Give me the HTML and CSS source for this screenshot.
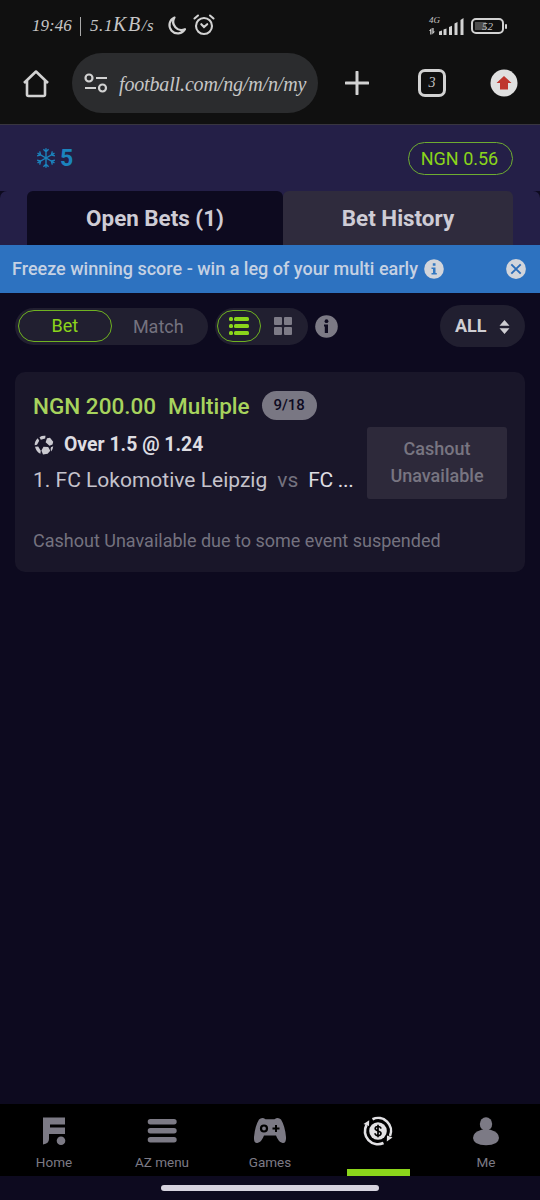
FILE: index.html
```html
<!DOCTYPE html>
<html lang="en">
<head>
<meta charset="utf-8">
<title>Open Bets</title>
<link rel="stylesheet" href="styles.css">
</head>
<body>
<div class="browser">
  <div class="status">
    <span class="clock">19:46</span><span class="divider"></span><span class="speed">5.1<span class="unit">KB</span>/s</span>
    <svg class="moon" width="20" height="20" viewBox="0 0 20 20"><path d="M7.500 1.500A8.300 8.300 0 1 0 18 13.200 8.200 8.200 0 0 1 7.500 1.500Z" fill="none" stroke="#d2d2d2" stroke-width="2.200" stroke-linejoin="round"/></svg>
    <svg class="alarm" width="22" height="22" viewBox="0 0 22 22" fill="none" stroke="#d2d2d2" stroke-width="2.100" stroke-linecap="round"><circle cx="11" cy="12" r="8"/><path d="M1.500 4.500 5 1.500M20.500 4.500 17 1.500M8.300 10.200 11 13l3.200-2.800"/></svg>
    <span class="signal"><span class="net">4G</span></span>
    <svg class="bars" width="36" height="18" viewBox="0 0 36 18" fill="#d2d2d2"><path d="M10 14.500 13 13.500V18h-3zM14.500 12.500l3-1V18h-3zM20 10l3-1.200V18h-3zM25.500 6.500l3-1.500v13h-3zM31.500 3l3-2v17h-3zM0 14l2.500-3v6.500H1.200V14ZM3.300 11h1.300v3.500H6l-2.700 3Z"/></svg>
    <span class="battery"><span class="level">52</span></span>
  </div>
  <div class="toolbar">
    <svg width="28" height="30" viewBox="0 0 28 30"><path d="M2 15 14 3.500 26 15M5 12.500v14q0 1.500 1.500 1.500h15q1.500 0 1.500-1.500v-14" fill="none" stroke="#d2d2d2" stroke-width="2.600" stroke-linejoin="round"/></svg>
    <div class="address">
      <svg width="24" height="20" viewBox="0 0 24 20" fill="none" stroke="#d2d2d2" stroke-width="2.200"><circle cx="5" cy="5" r="3.500"/><path d="M12 5h11M1 15h11"/><circle cx="18.500" cy="15" r="3.500"/></svg>
      <span class="url">football.com/ng/m/n/my</span>
    </div>
    <svg class="plus" width="24" height="24" viewBox="0 0 24 24"><path d="M12 1v22M1 12h22" stroke="#d2d2d2" stroke-width="3" stroke-linecap="round"/></svg>
    <span class="tabcount">3</span>
    <svg class="update" width="28" height="28" viewBox="0 0 28 28"><circle cx="14" cy="14" r="13.500" fill="#e0e0e0"/><path d="M14 7 21.500 14H18v6.500h-8V14H6.500Z" fill="#bf352d"/></svg>
  </div>
</div>

<header class="wallet">
  <svg width="20" height="22" viewBox="0 0 20 22"><g fill="none" stroke="#1b83bd" stroke-width="1.400"><path id="arm" d="M10 11V1.200M7.400 2.200 10 4.800l2.600-2.600"/><use href="#arm" transform="rotate(60 10 11)"/><use href="#arm" transform="rotate(120 10 11)"/><use href="#arm" transform="rotate(180 10 11)"/><use href="#arm" transform="rotate(240 10 11)"/><use href="#arm" transform="rotate(300 10 11)"/></g></svg>
  <span class="freezes">5</span>
  <span class="balance">NGN 0.56</span>
</header>
<div class="tabshell"><nav class="tabs"><span class="tab active">Open Bets (1)</span><span class="tab history">Bet History</span></nav></div>

<div class="banner">
  <span class="promo">Freeze winning score - win a leg of your multi early</span>
  <svg class="binfo" width="20" height="20" viewBox="0 0 20 20"><circle cx="10" cy="10" r="9.800" fill="#d2d5db"/><path d="M7.500 8.500h4V14h1.300v1.500H7.500V14H9v-4H7.500ZM8.800 4.300h2.700v2.500H8.800Z" fill="#3479c1"/></svg>
  <svg class="close" width="20" height="20" viewBox="0 0 20 20"><circle cx="10" cy="10" r="9.900" fill="#d2d5db"/><path d="m5.300 5.300 9.400 9.400m0-9.400-9.400 9.400" stroke="#2c6db8" stroke-width="1.900"/></svg>
</div>

<main>
  <div class="filters">
    <div class="switch"><span class="choice selected">Bet</span><span class="choice match">Match</span></div>
    <div class="views">
      <span class="view selected"><svg width="20" height="20" viewBox="0 0 20 20" fill="#8bd51b"><rect y="1" width="4" height="4" rx="1.500"/><rect x="5" y="1" width="15" height="4" rx="1.500"/><rect y="8" width="4" height="4" rx="1.500"/><rect x="5" y="8" width="15" height="4" rx="1.500"/><rect y="15" width="4" height="4" rx="1.500"/><rect x="5" y="15" width="15" height="4" rx="1.500"/></svg></span>
      <span class="view"><svg width="18" height="18" viewBox="0 0 18 18" fill="#7d7b87"><rect width="8" height="8" rx="1"/><rect x="10" width="8" height="8" rx="1"/><rect y="10" width="8" height="8" rx="1"/><rect x="10" y="10" width="8" height="8" rx="1"/></svg></span>
    </div>
    <svg class="help" width="23" height="23" viewBox="0 0 23 23"><circle cx="11.500" cy="11.500" r="11.300" fill="#7c7a85"/><path d="M9 9.500h4V18H9.800v-6.500H9Z" fill="#0e0b20"/><circle cx="11.500" cy="6.200" r="1.900" fill="#0e0b20"/></svg>
    <div class="all"><span>ALL</span><svg width="11" height="14" viewBox="0 0 11 14" fill="#cfced3"><path d="m5.500 0 5 5.800H.5ZM5.500 14l5-5.800H.5Z"/></svg></div>
  </div>

  <article class="card">
    <div class="summary"><span class="stake">NGN 200.00</span><span class="kind">Multiple</span><span class="progress">9/18</span></div>
    <div class="details">
      <div class="selection">
        <div class="pick"><svg width="20" height="20" viewBox="0 0 20 20" fill="#cbcad0"><path d="M5.500 2.200Q8 .4 11.500.8l-.3 2.700L6.800 4.700ZM3.800 3.200l1.400 2.600L3 9.800.7 10.200Q.5 6 3.800 3.200ZM13 3.200l3-.4 3.200 4-.7 2.700-3 1.300-3.900-3.500ZM1 11.800l3.200-.2 2.600 4.200-.4 3Q2.500 17.500 1 11.800ZM9.500 11.700l4.700.3 2.100 3.700-2.700 3.100-4.600.8-1.600-4ZM17 12.200l2.200-1q-.3 3.300-2 5.300l-.6-2.500Z"/></svg><span>Over 1.5 @ 1.24</span></div>
        <div class="teams"><span class="home">1. FC Lokomotive Leipzig</span><span class="vs">vs</span><span class="away">FC ...</span></div>
      </div>
      <div class="cashout"><span>Cashout</span><span>Unavailable</span></div>
    </div>
    <p class="notice">Cashout Unavailable due to some event suspended</p>
  </article>
</main>

<nav class="bottom">
  <span class="item"><svg width="32" height="32" viewBox="0 0 32 32" fill="#7c7a85"><path d="M5 2.500h22v7H12v3h15v6.500H11v5q0 4.500-6 5.500Z"/><circle cx="23" cy="25.700" r="4.300"/></svg><span>Home</span></span>
  <span class="item"><svg width="32" height="32" viewBox="0 0 32 32" fill="#7c7a85"><rect x="1.700" y="4" width="29" height="5.500" rx="2.700"/><rect x="1.700" y="13" width="29" height="5.500" rx="2.700"/><rect x="1.700" y="22" width="29" height="5.500" rx="2.700"/></svg><span>AZ menu</span></span>
  <span class="item"><svg width="34" height="32" viewBox="0 0 34 32"><path d="M6 4.500Q9 1.500 12.500 4.200h9Q25 1.500 28 4.500 32 11 33 22q.3 7-4 5.800-3.500-.8-6-7.300H11q-2.500 6.500-6 7.300Q.7 29 1 22 2 11 6 4.500Z" fill="#7c7a85"/><circle cx="11" cy="13.500" r="3" fill="none" stroke="#000" stroke-width="2.200"/><path d="M23 10v7M19.500 13.500h7" stroke="#000" stroke-width="2"/></svg><span>Games</span></span>
  <span class="item current"><svg width="32" height="32" viewBox="0 0 32 32"><g fill="none" stroke="#e2e1e4" stroke-width="2.600"><path d="M10.500 4.200A13 13 0 0 1 28 21M21.500 28A13 13 0 0 1 4.500 10"/></g><path d="M1.500 9 7.200 5.200 7 11ZM30.500 22.500 24.800 26.500 25 20.500Z" fill="#e2e1e4"/><circle cx="16" cy="16" r="8.800" fill="#e2e1e4"/><path d="M19 13.600q-.5-2.100-3-2.100-2.800 0-2.800 2.100c0 2.800 5.800 1.900 5.800 4.700 0 3.200-5.800 3-6 0M16 9.800v12.400" fill="none" stroke="#000" stroke-width="1.700"/></svg><span class="marker"></span></span>
  <span class="item"><svg width="32" height="32" viewBox="0 0 32 32" fill="#7c7a85"><ellipse cx="16" cy="9" rx="6.200" ry="6.800"/><path d="M3 23Q3 17 11.500 14.700h9Q29 17 29 23 28.500 30.300 16 30.300T3 23Z"/></svg><span>Me</span></span>
</nav>
<div class="gesture"><span></span></div>
</body>
</html>
```
FILE: styles.css
```css
* { box-sizing: border-box; }
body { margin: 0; height: 1200px; display: flex; flex-direction: column; overflow: hidden; background: #0d0a1f; font-family: Roboto, sans-serif; white-space: nowrap; }
svg { display: block; flex: none; }

.browser { height: 125px; background: #101010; border-bottom: 1px solid #38353f; color: #c6c6c6; font-family: "Liberation Serif", serif; font-style: italic; }
.status { height: 52px; display: flex; align-items: center; padding-left: 32px; font-size: 17px; }
.clock { width: 48px; }
.divider { width: 1px; height: 19px; background: #aaa; }
.speed { width: 82px; padding-left: 9px; margin-right: 4px; letter-spacing: .6px; }
.unit { font-size: 20px; line-height: 17px; letter-spacing: 1.5px; }
.alarm { margin-left: 6px; margin-top: -2px; }
.signal { width: 10px; margin-left: 214px; height: 20px; font-size: 9px; line-height: 8px; }
.bars { margin-left: -10px; margin-right: 6px; }
.battery { width: 33px; height: 16px; border: 2px solid #d2d2d2; border-radius: 5px; position: relative; padding: 2px; }
.battery::after { content: ""; position: absolute; right: -5px; top: 4px; width: 2px; height: 5px; background: #d2d2d2; border-radius: 1px; }
.level { display: block; height: 8px; background: linear-gradient(90deg, #4c4c4c 45%, transparent 45%); font-size: 11px; line-height: 8px; text-align: center; }
.toolbar { height: 62px; display: flex; align-items: center; padding-left: 22px; }
.address { width: 246px; height: 60px; margin-left: 22px; padding-left: 12px; border-radius: 30px; background: #2b2c2e; display: flex; align-items: center; }
.url { margin-left: 11px; margin-top: 3px; font-size: 20px; letter-spacing: -.15px; }
.plus { margin-left: 27px; }
.tabcount { width: 28px; height: 28px; margin-left: 49px; border: 3px solid #d2d2d2; border-radius: 7px; font-size: 14px; line-height: 22px; text-align: center; }
.update { margin-left: 44px; }

.wallet { height: 66px; background: #241f47; display: flex; align-items: center; padding: 0 27px 0 36px; }
.freezes { color: #1b83bd; font-size: 23px; font-weight: 700; margin-left: 4px; }
.balance { margin-left: auto; width: 105px; height: 33px; border: 1px solid #6eac31; border-radius: 17px; color: #8bd51b; font-size: 18px; line-height: 31px; text-align: center; padding-right: 2px; }
.tabshell { background: #0d0a1f; }
.tabs { height: 54px; display: flex; padding: 0 27px; background: #241f47; border-radius: 7px 7px 0 0; color: #ceccd5; font-size: 22.4px; font-weight: 700; line-height: 55px; text-align: center; }
.tab { border-radius: 6px 6px 0 0; }
.active { width: 256px; background: #0d0a1f; }
.history { width: 230px; background: #2f2b3d; }

.banner { height: 48px; display: flex; align-items: center; padding: 0 14px 0 12px; background: #2d72c0; color: #c5d1e3; font-size: 18px; font-weight: 500; }
.binfo { margin-left: 6px; }
.promo { padding-bottom: 1px; }
.close { margin-left: auto; }

main { flex: 1; padding: 0 15px; }
.filters { height: 79px; display: flex; align-items: center; padding-bottom: 13px; }
.switch { width: 193px; height: 37px; padding: 2px 3px; border-radius: 19px; background: #211f30; display: flex; font-size: 18px; color: #74727f; text-align: center; line-height: 33px; }
.choice { width: 94px; height: 32px; }
.selected { border: 1px solid #6fb221; border-radius: 17px; color: #8bd51b; line-height: 30px; }
.views { width: 93px; height: 37px; margin-left: 7px; padding: 2px; border-radius: 19px; background: #211f30; display: flex; }
.view { width: 44px; height: 32px; display: grid; place-items: center; }
.help { margin-left: 7px; }
.all { width: 85px; height: 42px; margin-left: auto; padding-left: 15px; border-radius: 21px; background: #211f30; display: flex; align-items: center; gap: 12px; color: #cfced3; font-size: 18px; font-weight: 700; }
.all span { padding-bottom: 2px; }
.all svg { margin-top: 2px; }

.card { height: 200px; padding: 17px 18px; background: #191629; border-radius: 10px; }
.summary { height: 33px; display: flex; align-items: center; color: #a7d35d; font-size: 22.5px; font-weight: 500; }
.kind { margin-left: 12px; }
.progress { width: 55px; height: 29px; margin-left: 12px; border-radius: 15px; background: #797783; color: #0d0a1f; font-size: 15px; line-height: 29px; text-align: center; }
.details { display: flex; margin-top: 5px; }
.selection { width: 334px; }
.pick { height: 36px; display: flex; align-items: center; gap: 10px; color: #dedde2; font-size: 19.4px; font-weight: 700; }
.pick svg { margin-left: 1px; }
.pick span { padding-bottom: 1px; }
.teams { height: 36px; line-height: 35px; display: flex; font-size: 21px; color: #c5c3cc; }
.vs { color: #74727f; margin: 0 10px; }
.away { color: #dedde2; letter-spacing: -.3px; }
.cashout { width: 140px; height: 72px; padding-top: 8px; border-radius: 3px; background: #2d293a; color: #787581; font-size: 18px; font-weight: 500; line-height: 27px; text-align: center; display: flex; flex-direction: column; }
.notice { margin: 28px 0 0; color: #74727f; font-size: 18px; line-height: 28px; }

.bottom { height: 72px; background: #000; display: grid; grid-template-columns: repeat(5, 1fr); color: #7c7a85; font-size: 13.5px; }
.item { display: flex; flex-direction: column; align-items: center; padding-top: 11px; line-height: 20px; }
.item > span { margin-top: 5px; }
.item .marker { width: 63px; height: 7px; margin-top: 22px; background: #8bd51b; }
.gesture { height: 24px; padding-top: 9px; display: flex; justify-content: center; }
.gesture span { width: 218px; height: 6px; border-radius: 3px; background: #d6d3df; }
```
